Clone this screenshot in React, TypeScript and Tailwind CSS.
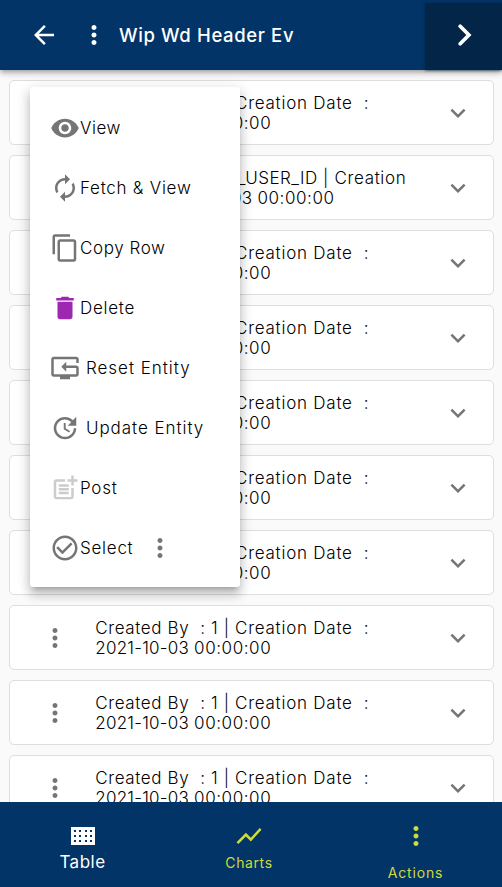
import type { ReactNode } from "react";
import {
  MdArrowBack, MdMoreVert, MdVisibility, MdAutorenew, MdContentCopy, MdDelete, MdResetTv,
  MdUpdate, MdPostAdd, MdCheckCircleOutline, MdExpandMore, MdShowChart,
} from "react-icons/md";

function Row({ children }: { children: ReactNode }) {
  return (
    <div className="flex h-[65px] shrink-0 items-center rounded-[5px] border border-[#dedede] bg-white">
      <MdMoreVert size={30} className="ml-[30.4px] shrink-0 text-[#757575]" />
      <div className="ml-[24.9px] flex-1 whitespace-pre text-[17px] leading-5 text-black">{children}</div>
      <MdExpandMore size={30} className="mr-5 shrink-0 text-[#757575]" />
    </div>
  );
}

function Timestamp() {
  return (
    <>
      <span className="tracking-[0.23px]">2021-10-03 </span>
      <span className="tracking-[0.58px]">00:00:00</span>
    </>
  );
}

function DatedRow() {
  return (
    <Row>
      <div>
        <span className="tracking-[0.62px]">{"Created By  : 1 | "}</span>
        <span className="tracking-[0.76px]">{"Creation Date  :"}</span>
      </div>
      <div><Timestamp /></div>
    </Row>
  );
}

function UserRow() {
  return (
    <Row>
      <div>
        <span className="tracking-[0.6px]">{"Created By  : "}</span>
        <span className="inline-block w-[27px]">XX</span>
        <span className="tracking-[0.5px]">_USER_ID</span>
        <span className="tracking-[0.65px]">{" | Creation"}</span>
      </div>
      <div>
        <span className="tracking-[0.98px]">{"Date  : "}</span>
        <Timestamp />
      </div>
    </Row>
  );
}

function MenuItem({ icon, label, className = "tracking-[0.74px]", children }: { icon: ReactNode; label: string; className?: string; children?: ReactNode }) {
  return (
    <div className="flex h-[60px] items-center whitespace-nowrap pl-5 text-[17px] text-black">
      {icon}
      <span className={`pt-[2px] ${className}`}>{label}</span>
      {children}
    </div>
  );
}

function TableIcon() {
  return (
    <svg width="24" height="18" viewBox="0 0 24 18" shapeRendering="crispEdges">
      <path fill="white" d="M0 0h24v18H0z" />
      {[3, 8, 14, 19].map((x) => [3, 8, 13].map((y) => (
        <rect key={`${x}-${y}`} x={x} y={y} width="2" height="2" fill="#023468" />
      )))}
    </svg>
  );
}

export default function App() {
  return (
    <div className="relative flex h-[887px] w-[502px] flex-col overflow-hidden bg-[#fafafa] font-['Inter','Noto_Sans',sans-serif] font-light">
      <header className="z-10 flex h-[70px] shrink-0 items-center bg-[#023468] text-white shadow-[0_2px_4px_-1px_rgba(0,0,0,0.2),0_4px_5px_rgba(0,0,0,0.14),0_1px_10px_rgba(0,0,0,0.12)]">
        <MdArrowBack size={30} className="ml-[29px]" />
        <MdMoreVert size={30} className="ml-5" />
        <h1 className="ml-[10px] flex-1 whitespace-nowrap pt-[2px] text-[18.5px] font-medium tracking-[0.63px]">Wip Wd Header Ev</h1>
        <div className="mt-[3px] flex h-[67px] w-[77px] items-center justify-center bg-[#022548] pb-[3px] shadow-[0_0_3px_#022548]">
          <svg width="14" height="22" viewBox="0 0 14 22" className="ml-[2px]">
            <path d="M2.2 2.3l8.7 8.7-8.7 8.7" fill="none" stroke="white" strokeWidth="3.7" strokeLinecap="round" />
          </svg>
        </div>
      </header>
      <main className="flex min-h-0 flex-1 flex-col gap-[10px] overflow-hidden pl-[9px] pr-2 pt-[10px]">
        <DatedRow />
        <UserRow />
        <DatedRow />
        <DatedRow />
        <DatedRow />
        <DatedRow />
        <DatedRow />
        <DatedRow />
        <DatedRow />
        <DatedRow />
      </main>
      <nav className="flex h-[85px] shrink-0 bg-[#023468] font-normal text-[#cddc39]">
        <div className="flex w-[165px] flex-col items-center pt-[25px] text-white">
          <TableIcon />
          <span className="mt-[7px] text-[17px] leading-5 tracking-[0.5px]">Table</span>
        </div>
        <div className="flex w-[168px] flex-col items-center pt-[19px]">
          <MdShowChart size={30} />
          <span className="mt-[2px] text-[14px] leading-5 tracking-[0.6px]">Charts</span>
        </div>
        <div className="flex flex-1 flex-col items-center pr-1 pt-[19px]">
          <MdMoreVert size={30} />
          <span className="mt-3 text-[14px] leading-5 tracking-[0.85px]">Actions</span>
        </div>
      </nav>
      <div className="absolute left-[30px] top-[87.4px] z-20 h-[500px] w-[210px] rounded-[3px] bg-white pt-[10.6px] shadow-[0_5px_5px_-3px_rgba(0,0,0,0.2),0_8px_10px_1px_rgba(0,0,0,0.14),0_3px_14px_2px_rgba(0,0,0,0.12)]">
        <MenuItem icon={<MdVisibility size={30} color="#757575" />} label="View" className="tracking-[0.55px]" />
        <MenuItem icon={<MdAutorenew size={30} color="#757575" />} label="Fetch & View" />
        <MenuItem icon={<MdContentCopy size={30} color="#757575" />} label="Copy Row" className="tracking-[0.6px]" />
        <MenuItem icon={<MdDelete size={30} color="#9c27b0" />} label="Delete" />
        <MenuItem icon={<MdResetTv size={30} color="#757575" />} label="Reset Entity" className="ml-[6px] tracking-[0.97px]" />
        <MenuItem icon={<MdUpdate size={30} color="#757575" />} label="Update Entity" className="ml-[6px] tracking-[0.94px]" />
        <MenuItem icon={<MdPostAdd size={30} color="#cccccc" />} label="Post" />
        <MenuItem icon={<MdCheckCircleOutline size={30} color="#757575" />} label="Select">
          <MdMoreVert size={30} className="ml-3 text-[#757575]" />
        </MenuItem>
      </div>
    </div>
  );
}
